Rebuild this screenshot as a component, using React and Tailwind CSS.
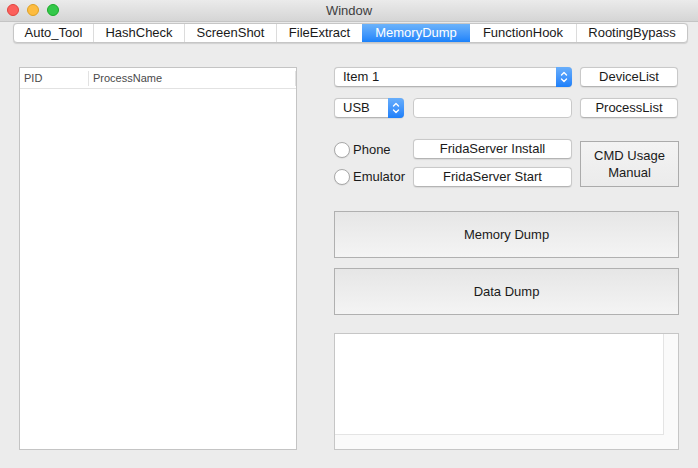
import React from "react";

function Stepper({ className }) {
  return (
    <div className={"flex items-center justify-center bg-gradient-to-b from-[#68aefb] to-[#1b7ffa] rounded-r-[4px] " + className}>
      <svg width="8" height="14" viewBox="0 0 8 14" fill="none" stroke="white" strokeWidth="1.4" strokeLinecap="round" strokeLinejoin="round">
        <path d="M1.5 5 L4 2.5 L6.5 5" />
        <path d="M1.5 9 L4 11.5 L6.5 9" />
      </svg>
    </div>
  );
}

function PushButton({ children, className = "" }) {
  return (
    <div className={"flex items-center justify-center bg-white border border-[#c9c9c9] border-b-[#b4b4b4] rounded-[4px] shadow-[0_0.5px_1px_rgba(0,0,0,0.08)] text-[13px] text-[#1a1a1a] " + className}>
      {children}
    </div>
  );
}

function Radio({ label }) {
  return (
    <div className="flex items-center h-[20px]">
      <div className="w-[16px] h-[16px] rounded-full bg-white border border-[#a9a9a9] shadow-[0_0.5px_1px_rgba(0,0,0,0.1)]" />
      <span className="ml-[3px] text-[13px] text-[#1a1a1a]">{label}</span>
    </div>
  );
}

const tabs = [
  ["Auto_Tool", 79],
  ["HashCheck", 91],
  ["ScreenShot", 92],
  ["FileExtract", 86],
  ["MemoryDump", 108],
  ["FunctionHook", 106],
  ["RootingBypass", 111],
];

export default function App() {
  return (
    <div className="w-[698px] h-[468px] bg-[#ececec] overflow-hidden font-['Liberation_Sans',Arial,sans-serif] flex flex-col">
      {/* title bar */}
      <div className="relative h-[22px] shrink-0 bg-gradient-to-b from-[#ebebeb] to-[#d5d5d5] border-b border-[#c4c4c4] flex items-center justify-center">
        <div className="absolute left-[7px] top-[4px] flex gap-[8px]">
          <div className="w-[12px] h-[12px] rounded-full bg-[#fc605c] border border-[#e0443e]" />
          <div className="w-[12px] h-[12px] rounded-full bg-[#fdbc40] border border-[#dea123]" />
          <div className="w-[12px] h-[12px] rounded-full bg-[#34c84a] border border-[#1aab29]" />
        </div>
        <span className="text-[13px] text-[#404040]">Window</span>
      </div>

      {/* tabs */}
      <div className="flex justify-start pl-[13px] mt-[1px] h-[20px] shrink-0">
        <div className="flex h-[20px] bg-white border border-[#c6c6c6] rounded-[4px] shadow-[0_0.5px_1px_rgba(0,0,0,0.12)] overflow-hidden">
          {tabs.map(([t, w], i) => {
            const sel = t === "MemoryDump";
            return (
              <div
                key={t}
                style={{ width: w }}
                className={
                  "flex items-center justify-center text-[13px] " +
                  (sel
                    ? "bg-gradient-to-b from-[#6cb3fa] to-[#1a82fb] text-white"
                    : "text-[#1a1a1a] ") +
                  (i > 0 && !sel && tabs[i - 1][0] !== "MemoryDump" ? " border-l border-[#dcdcdc]" : "")
                }
              >
                {t}
              </div>
            );
          })}
        </div>
      </div>

      {/* content */}
      <div className="flex pl-[19px] mt-[24px]">
        {/* table */}
        <div className="w-[278px] h-[383px] bg-white border border-[#c4c4c4] flex flex-col">
          <div className="h-[21px] flex items-center border-b border-[#e2e2e2] text-[11px] text-[#4a4a4a]">
            <div className="w-[69px] pl-[4px] border-r border-[#e2e2e2] h-[15px] flex items-center">PID</div>
            <div className="flex-1 pl-[4px] border-r border-[#e2e2e2] h-[15px] flex items-center">ProcessName</div>
          </div>
        </div>

        {/* right column */}
        <div className="ml-[37px] w-[345px] flex flex-col">
          {/* row 1 */}
          <div className="flex h-[20px]">
            <div className="w-[238px] h-[20px] flex bg-white border border-[#c9c9c9] border-b-[#b4b4b4] rounded-[4px] shadow-[0_0.5px_1px_rgba(0,0,0,0.08)]">
              <div className="flex-1 flex items-center pl-[8px] text-[13px] text-[#1a1a1a]">Item 1</div>
              <Stepper className="w-[16px] -my-[1px] -mr-[1px]" />
            </div>
            <PushButton className="ml-[8px] w-[98px] h-[20px]">DeviceList</PushButton>
          </div>

          {/* row 2 */}
          <div className="flex h-[20px] mt-[11px]">
            <div className="w-[70px] h-[20px] flex bg-white border border-[#c9c9c9] border-b-[#b4b4b4] rounded-[4px] shadow-[0_0.5px_1px_rgba(0,0,0,0.08)]">
              <div className="flex-1 flex items-center pl-[8px] text-[13px] text-[#1a1a1a]">USB</div>
              <Stepper className="w-[16px] -my-[1px] -mr-[1px]" />
            </div>
            <div className="ml-[9px] w-[159px] h-[20px] bg-white border border-[#c9c9c9] rounded-[4px]" />
            <PushButton className="ml-[8px] w-[98px] h-[20px]">ProcessList</PushButton>
          </div>

          {/* row 3 */}
          <div className="flex mt-[21px]">
            <div className="flex flex-col w-[79px] pt-[1px] gap-[7px]">
              <Radio label="Phone" />
              <Radio label="Emulator" />
            </div>
            <div className="flex flex-col w-[159px] gap-[8px]">
              <PushButton className="h-[20px]">FridaServer Install</PushButton>
              <PushButton className="h-[20px]">FridaServer Start</PushButton>
            </div>
            <div className="ml-[8px] mt-[2px] w-[99px] h-[46px] flex items-center justify-center text-center leading-[17px] text-[13px] text-[#1a1a1a] bg-gradient-to-b from-[#f3f3f3] to-[#ebebeb] border border-[#ababab]">
              CMD Usage<br />Manual
            </div>
          </div>

          {/* big buttons */}
          <div className="mt-[24px] h-[47px] flex items-center justify-center text-[13px] text-[#1a1a1a] bg-gradient-to-b from-[#e6e6e6] to-[#f4f4f4] border border-[#b0b0b0]">
            Memory Dump
          </div>
          <div className="mt-[10px] h-[47px] flex items-center justify-center text-[13px] text-[#1a1a1a] bg-gradient-to-b from-[#e6e6e6] to-[#f4f4f4] border border-[#b0b0b0]">
            Data Dump
          </div>

          {/* text area */}
          <div className="mt-[18px] h-[117px] border border-[#c6c6c6] bg-[#fafafa] flex flex-col">
            <div className="flex h-[101px]">
              <div className="w-[329px] bg-white border-r border-b border-[#e4e4e4]" />
            </div>
          </div>
        </div>
      </div>
    </div>
  );
}
